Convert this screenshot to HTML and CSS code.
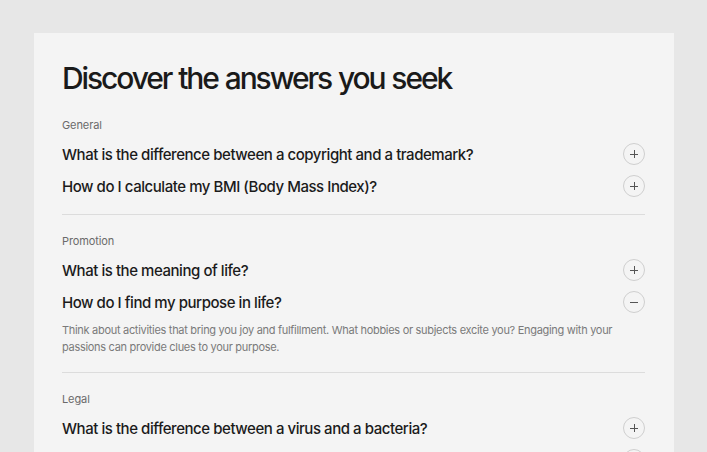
FILE: index.html
```html
<!DOCTYPE html>
<html>
<head>
<meta charset="utf-8">
<link rel="stylesheet" href="styles.css">
</head>
<body>
<div class="card">
  <h1 class="title">Discover the answers you seek</h1>

  <section class="group">
    <div class="label">General</div>
    <div class="row"><span class="q">What is the difference between a copyright and a trademark?</span><span class="btn plus"></span></div>
    <div class="row"><span class="q">How do I calculate my BMI (Body Mass Index)?</span><span class="btn plus"></span></div>
  </section>

  <section class="group">
    <div class="label">Promotion</div>
    <div class="row"><span class="q">What is the meaning of life?</span><span class="btn plus"></span></div>
    <div class="row"><span class="q">How do I find my purpose in life?</span><span class="btn minus"></span></div>
    <p class="answer">Think about activities that bring you joy and fulfillment. What hobbies or subjects excite you? Engaging with your passions can provide clues to your purpose.</p>
  </section>

  <section class="group last">
    <div class="label">Legal</div>
    <div class="row"><span class="q">What is the difference between a virus and a bacteria?</span><span class="btn plus"></span></div>
    <div class="row"><span class="q">How long does it take to get a patent?</span><span class="btn plus"></span></div>
  </section>
</div>
</body>
</html>
```

FILE: styles.css
```css
html, body {
  margin: 0;
  background: #e7e7e7;
  font-family: Inter, "Noto Sans", sans-serif;
  color: #1b1b1b;
  height: 452px;
  overflow: hidden;
}
body {
  padding: 33px 33px 0 34px;
}
.card {
  background: #f4f4f4;
  padding: 26px 29px 0 28px;
  min-height: 600px;
}
.title {
  margin: 0;
  font-size: 30px;
  line-height: 38px;
  font-weight: 500;
  letter-spacing: -2.1px;
  word-spacing: 1px;
  color: #1a1a1a;
}
.group {
  padding-top: 18px;
  padding-bottom: 12px;
  border-bottom: 1px solid #dcdcdc;
}
.group:first-of-type {
  padding-top: 20px;
}
.group.last {
  border-bottom: none;
}
.label {
  font-size: 11px;
  line-height: 16px;
  color: #6a6a6a;
  letter-spacing: -0.1px;
  margin-bottom: 5px;
}
.row {
  height: 32px;
  display: flex;
  align-items: center;
  justify-content: space-between;
}
.q {
  font-size: 15px;
  font-weight: 500;
  letter-spacing: -0.45px;
  color: #1b1b1b;
}
.btn {
  width: 20px;
  height: 20px;
  border: 1px solid #cfcfcf;
  border-radius: 50%;
  position: relative;
  flex: none;
}
.btn::before, .btn::after {
  content: "";
  position: absolute;
  background: #555;
  left: 50%;
  top: 50%;
}
.btn::before {
  width: 8px;
  height: 1px;
  margin: -0.5px 0 0 -4px;
}
.plus::after {
  width: 1px;
  height: 8px;
  margin: -4px 0 0 -0.5px;
}
.minus::after {
  display: none;
}
.answer {
  margin: 4px 20px 4px 0;
  font-size: 11px;
  line-height: 17px;
  color: #7a7a7a;
  letter-spacing: -0.3px;
}
```
